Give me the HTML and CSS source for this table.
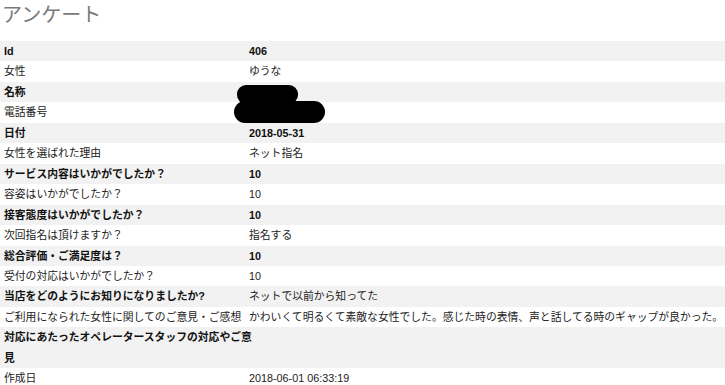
FILE: index.html
```html
<!DOCTYPE html>
<html lang="ja">
<head>
<meta charset="utf-8">
<title>アンケート</title>
<link rel="stylesheet" href="styles.css">
</head>
<body>
<h1 class="title">アンケート</h1>
<div class="wrap">
<table class="survey">
<colgroup><col class="col-label"><col></colgroup>
<tbody>
<tr class="odd"><th>Id</th><td>406</td></tr>
<tr><th>女性</th><td>ゆうな</td></tr>
<tr class="odd"><th>名称</th><td></td></tr>
<tr><th>電話番号</th><td></td></tr>
<tr class="odd"><th>日付</th><td>2018-05-31</td></tr>
<tr><th>女性を選ばれた理由</th><td>ネット指名</td></tr>
<tr class="odd"><th>サービス内容はいかがでしたか？</th><td>10</td></tr>
<tr><th>容姿はいかがでしたか？</th><td>10</td></tr>
<tr class="odd"><th>接客態度はいかがでしたか？</th><td>10</td></tr>
<tr><th>次回指名は頂けますか？</th><td>指名する</td></tr>
<tr class="odd"><th>総合評価・ご満足度は？</th><td>10</td></tr>
<tr><th>受付の対応はいかがでしたか？</th><td>10</td></tr>
<tr class="odd"><th>当店をどのようにお知りになりましたか?</th><td class="plain">ネットで以前から知ってた</td></tr>
<tr><th>ご利用になられた女性に関してのご意見・ご感想</th><td>かわいくて明るくて素敵な女性でした。感じた時の表情、声と話してる時のギャップが良かった。</td></tr>
<tr class="odd"><th>対応にあたったオペレータースタッフの対応やご意<br>見</th><td></td></tr>
<tr><th>作成日</th><td>2018-06-01 06:33:19</td></tr>
</tbody>
</table>
<span class="blot blot-a"></span>
<span class="blot blot-b"></span>
</div>
</body>
</html>
```

FILE: styles.css
```css
html, body {
  margin: 0;
  padding: 0;
  background: #ffffff;
}

body {
  font-family: "Liberation Sans", "Noto Sans CJK JP", sans-serif;
  color: #222222;
}

.title {
  margin: 0;
  padding: 0 0 0 2px;
  height: 41px;
  font-family: "Noto Sans CJK JP", sans-serif;
  font-size: 20px;
  font-weight: 400;
  line-height: 28px;
  color: #7a7a7a;
}

.wrap {
  position: relative;
}

.survey {
  width: 100%;
  table-layout: fixed;
  border-collapse: collapse;
  border-spacing: 0;
  font-size: 10.8px;
  line-height: 20.45px;
}

.col-label {
  width: 249px;
}

.survey th,
.survey td {
  padding: 0;
  text-align: left;
  vertical-align: top;
  font-weight: 400;
  white-space: nowrap;
}

.survey th {
  padding-left: 4px;
}

.survey tr.odd th,
.survey tr.odd td {
  background: #f2f2f2;
  font-weight: 700;
  color: #111111;
}

.survey tr.odd td.plain {
  font-weight: 400;
  color: #222222;
}

.blot {
  position: absolute;
  background: #000000;
}

.blot-a {
  left: 237px;
  top: 44px;
  width: 61px;
  height: 19px;
  border-radius: 9px;
}

.blot-b {
  left: 234px;
  top: 60px;
  width: 91px;
  height: 22px;
  border-radius: 11px;
}
```
